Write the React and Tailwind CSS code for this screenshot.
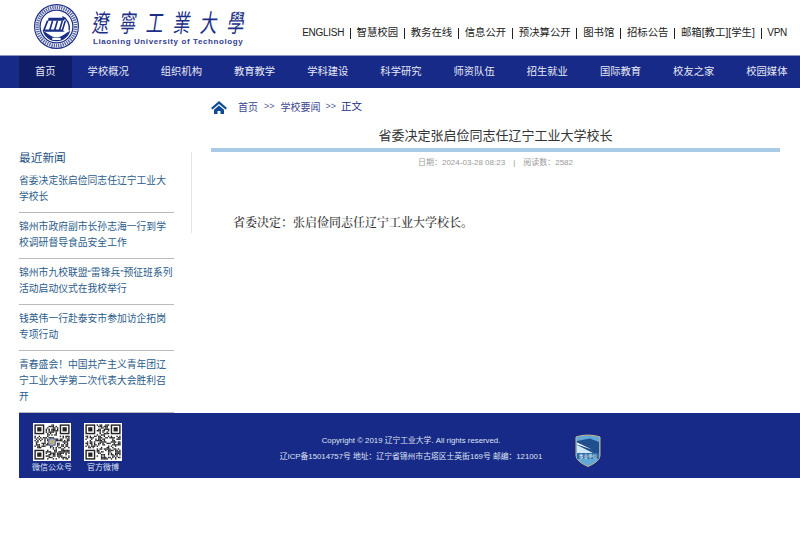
import React from 'react';

const NAV = ['首页', '学校概况', '组织机构', '教育教学', '学科建设', '科学研究', '师资队伍', '招生就业', '国际教育', '校友之家', '校园媒体'];
const LINKS = ['ENGLISH', '智慧校园', '教务在线', '信息公开', '预决算公开', '图书馆', '招标公告', '邮箱[教工][学生]', 'VPN'];
const NEWS = [
  '省委决定张启俭同志任辽宁工业大学校长',
  '锦州市政府副市长孙志海一行到学校调研督导食品安全工作',
  '锦州市九校联盟“雷锋兵”预征班系列活动启动仪式在我校举行',
  '钱英伟一行赴泰安市参加访企拓岗专项行动',
  '青春盛会！中国共产主义青年团辽宁工业大学第二次代表大会胜利召开',
];

const CJK = "font-['Liberation_Sans','Noto_Sans_CJK_SC',sans-serif]";

// small pseudo random pattern, good enough for a qr code at this size
const QrCode = ({ seed, logo }) => {
  const cells = [];
  let s = seed;
  const finder = (x, y) => (x < 8 && y < 8) || (x > 16 && y < 8) || (x < 8 && y > 16);
  for (let y = 0; y < 25; y++) {
    for (let x = 0; x < 25; x++) {
      s = (s * 1103515245 + 12345) & 0x7fffffff;
      if (!finder(x, y) && (s >> 16) % 2 === 0) {
        cells.push(<rect key={`${x}-${y}`} x={x} y={y} width="1" height="1" />);
      }
    }
  }
  const eye = (x, y) => (
    <g key={`${x}${y}`}>
      <rect x={x + 0.5} y={y + 0.5} width="6" height="6" fill="none" stroke="#222" strokeWidth="1" />
      <rect x={x + 2} y={y + 2} width="3" height="3" />
    </g>
  );
  return (
    <svg viewBox="-1 -1 27 27" className="w-[38px] h-[38px] bg-white" fill="#222">
      {cells}
      {eye(0, 0)}
      {eye(18, 0)}
      {eye(0, 18)}
      {logo && <circle cx="12.5" cy="12.5" r="2.6" fill="#b9a98a" stroke="#5f77b5" strokeWidth="0.8" />}
    </svg>
  );
};

const Seal = () => (
  <svg viewBox="0 0 46 46" className="w-[45px] h-[45px] shrink-0">
    <circle cx="23" cy="23" r="22.4" fill="#fff" stroke="#1b2f86" strokeWidth="1.2" />
    <circle cx="23" cy="23" r="19.6" fill="none" stroke="#5a68a8" strokeWidth="3.6" strokeDasharray="1.4 0.9" />
    <circle cx="23" cy="23" r="16.8" fill="#fff" stroke="#1b2f86" strokeWidth="1.3" />
    <path d="M9 27 C14 30 18 34 23 34 C28 34 32 30 37 27 C36 33 30 38 23 38 C16 38 10 33 9 27Z" fill="#1b2f86" />
    <path d="M15 14 H33 L30 17 H14Z" fill="#1b2f86" />
    <path d="M14 17 L10 27 H29 L32 17 M19 17 L16 27 M24 17 L21 27 M29 17 L26 27" fill="none" stroke="#1b2f86" strokeWidth="1.7" />
    <path d="M29 13 C34 15 37 21 36 27" fill="none" stroke="#1b2f86" strokeWidth="1.4" />
    <path d="M11 28 H31" stroke="#1b2f86" strokeWidth="0.8" />
    <rect x="18.5" y="34.5" width="9" height="2.4" rx="1" fill="#fff" />
  </svg>
);

const Badge = () => (
  <svg viewBox="0 0 26 33" className="w-[26px] h-[33px]">
    <path d="M1 3 C8 0.5 18 0.5 25 3 V21 C25 27 18 30 13 32.5 C8 30 1 27 1 21Z" fill="#5fa8d8" stroke="#c9b68a" strokeWidth="1" />
    <path d="M2 7 L15 4.5 L24 8 V19 H16 L2 11Z" fill="#1f4f8f" />
    <path d="M2 11 L18 19 H2Z" fill="#cfe6f5" />
    <path d="M2 8.5 L17 15.5 L2 10.5Z" fill="#fff" />
    <rect x="2" y="19" width="22" height="6" fill="#2a6da8" />
    <text x="13" y="24" fontSize="4.6" textAnchor="middle" fill="#fff" fontFamily="Noto Sans CJK SC">事业单位</text>
  </svg>
);

const App = () => {
  return (
    <div className={`w-[800px] h-[535px] bg-white overflow-hidden ${CJK}`}>
      <header className="h-[55px] flex items-center justify-between pl-[34px] pr-[13px] bg-white">
        <div className="flex items-center gap-[14px] -mt-[2px]">
          <Seal />
          <div className="flex flex-col items-start w-[152px]">
            <div className="h-[31px] w-full flex items-center justify-between text-[17px] leading-none text-[#1b2f86] font-['Noto_Sans_CJK_TC',serif]">
              {'遼寧工業大學'.split('').map((c) => <span key={c} className="scale-y-[1.45] -skew-x-12">{c}</span>)}
            </div>
            <div className="text-[8px] leading-[10px] tracking-[0.6px] font-bold text-[#33408f] whitespace-nowrap">Liaoning University of Technology</div>
          </div>
        </div>
        <div className="flex items-center mt-[11px] text-[10.4px] leading-[14px] text-[#222]">
          {LINKS.map((l, i) => (
            <React.Fragment key={l}>
              {i > 0 && <span className="w-px h-[11px] bg-[#222] mx-[5.75px]" />}
              <span className={`whitespace-nowrap ${i === 0 || l === 'VPN' ? 'text-[10px] tracking-[-0.3px]' : ''}`}>{l}</span>
            </React.Fragment>
          ))}
        </div>
      </header>

      <nav className="h-[33px] flex pl-[19px] bg-[#182a87] border-t border-[#8d96c2] text-[10.3px] text-[#e6e9f5]">
        {NAV.map((n, i) => (
          <a key={n} className={`px-4 flex items-center whitespace-nowrap ${i === 0 ? 'bg-[#0f1c66]' : ''}`}>{n}</a>
        ))}
      </nav>

      <main className="h-[325px] flex pl-[19px] pr-[20px]">
        <aside className="w-[155px] shrink-0 mt-[62px] flex flex-col">
          <h3 className="text-[11.7px] leading-[16px] font-normal text-[#24507f]">最近新闻</h3>
          <ul className="mt-[1px]">
            {NEWS.map((n) => (
              <li key={n} className="pt-[6px] pb-[7px] text-[9.8px] leading-[16px] text-[#2b5c8a] border-b border-[#bbb]">{n}</li>
            ))}
          </ul>
        </aside>
        <div className="w-px h-[81px] mt-[64px] ml-[17px] mr-[19px] shrink-0 bg-[#dfe6ef]" />
        <section className="flex-1 min-w-0">
          <div className="h-[38px] flex items-center text-[10px] text-[#39458f]">
            <svg viewBox="0 0 16 13" className="w-[16px] h-[13px] mr-[11px] fill-[#0f4a95]">
              <path d="M8 0 L16 7 L14.5 8.5 L8 3 L1.5 8.5 L0 7Z" />
              <path d="M8 4.5 L13 8.8 V13 H9.5 V10 H6.5 V13 H3 V8.8Z" />
            </svg>
            <span>首页</span>
            <span className="mx-[6px] text-[#555a9a] text-[9px]">&gt;&gt;</span>
            <span>学校要闻</span>
            <span className="mx-[5px] text-[#555a9a] text-[9px]">&gt;&gt;</span>
            <span className="text-[#1b2f86] text-[10.5px]">正文</span>
          </div>
          <h1 className="mt-[1px] text-[13px] leading-[18px] font-normal text-center text-[#333]">省委决定张启俭同志任辽宁工业大学校长</h1>
          <div className="h-[4px] mt-[3px] bg-[#a9cbe8]" />
          <div className="mt-[6px] text-[8px] leading-[10px] text-center text-[#999]">
            日期：2024-03-28 08:23<span className="mx-[8px]">|</span>阅读数：2582
          </div>
          <p className="mt-[47px] ml-[22px] text-[12px] leading-[16px] font-medium text-[#333] font-['Liberation_Serif','Noto_Serif_CJK_SC','Noto_Sans_CJK_SC',serif]">省委决定：张启俭同志任辽宁工业大学校长。</p>
        </section>
      </main>

      <footer className="h-[65px] ml-[19px] bg-[#182a87] flex text-[#dfe3f2]">
        <div className="flex gap-[13px] pl-[14px] pt-[10px]">
          <div className="w-[38px] flex flex-col items-center">
            <QrCode seed={7} logo />
            <span className="mt-[1px] text-[8px] leading-[12px] whitespace-nowrap">微信公众号</span>
          </div>
          <div className="w-[38px] flex flex-col items-center">
            <QrCode seed={23} />
            <span className="mt-[1px] text-[8px] leading-[12px] whitespace-nowrap">官方微博</span>
          </div>
        </div>
        <div className="ml-[158px] pt-[20px] w-[262px] flex flex-col items-center text-[7.8px] leading-[16px] whitespace-nowrap">
          <div>Copyright © 2019 辽宁工业大学. All rights reserved.</div>
          <div>辽ICP备15014757号 地址：辽宁省锦州市古塔区士英街169号 邮编：121001</div>
        </div>
        <div className="ml-[33px] pt-[21px]">
          <Badge />
        </div>
      </footer>
    </div>
  );
};

export default App;
